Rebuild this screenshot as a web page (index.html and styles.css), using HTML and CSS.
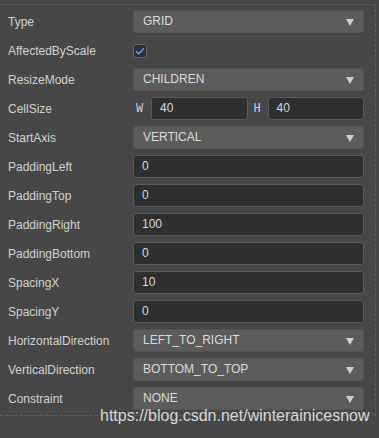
FILE: index.html
```html
<!DOCTYPE html>
<html lang="en">
<head>
    <meta charset="UTF-8">
    <meta name="viewport" content="width=device-width, initial-scale=1.0">
    <title>Layout Inspector</title>
    <link rel="stylesheet" href="styles.css">
</head>
<body>
    <div class="inspector">
        <div class="prop-row">
            <span class="prop-label">Type</span>
            <div class="select">GRID</div>
        </div>
        <div class="prop-row">
            <span class="prop-label">AffectedByScale</span>
            <span class="checkbox">
                <svg width="10" height="8" viewBox="0 0 10 8"><path d="M1 4.2 L3.8 6.8 L9 1.2" fill="none" stroke="#4d8fe8" stroke-width="1.8"/></svg>
            </span>
        </div>
        <div class="prop-row">
            <span class="prop-label">ResizeMode</span>
            <div class="select">CHILDREN</div>
        </div>
        <div class="prop-row">
            <span class="prop-label">CellSize</span>
            <div class="vec2">
                <span class="axis">W</span>
                <div class="input">40</div>
                <span class="axis">H</span>
                <div class="input">40</div>
            </div>
        </div>
        <div class="prop-row">
            <span class="prop-label">StartAxis</span>
            <div class="select">VERTICAL</div>
        </div>
        <div class="prop-row">
            <span class="prop-label">PaddingLeft</span>
            <div class="input">0</div>
        </div>
        <div class="prop-row">
            <span class="prop-label">PaddingTop</span>
            <div class="input">0</div>
        </div>
        <div class="prop-row">
            <span class="prop-label">PaddingRight</span>
            <div class="input">100</div>
        </div>
        <div class="prop-row">
            <span class="prop-label">PaddingBottom</span>
            <div class="input">0</div>
        </div>
        <div class="prop-row">
            <span class="prop-label">SpacingX</span>
            <div class="input">10</div>
        </div>
        <div class="prop-row">
            <span class="prop-label">SpacingY</span>
            <div class="input">0</div>
        </div>
        <div class="prop-row">
            <span class="prop-label">HorizontalDirection</span>
            <div class="select">LEFT_TO_RIGHT</div>
        </div>
        <div class="prop-row">
            <span class="prop-label">VerticalDirection</span>
            <div class="select">BOTTOM_TO_TOP</div>
        </div>
        <div class="prop-row">
            <span class="prop-label">Constraint</span>
            <div class="select">NONE</div>
        </div>
    </div>

    <div class="watermark">https://blog.csdn.net/winterainicesnow</div>
</body>
</html>
```

FILE: styles.css
```css
* {
    margin: 0;
    padding: 0;
    box-sizing: border-box;
}

body {
    font-family: "Liberation Sans", Arial, sans-serif;
    font-size: 12px;
    background: #474747;
    color: #d4d4d4;
    padding-top: 4px;
    position: relative;
    height: 438px;
    overflow: hidden;
}

.inspector {
    width: 376px;
    border-top: 1px solid #575757;
    border-right: 1px dashed #5e5e5e;
    border-bottom: 1px dashed #5e5e5e;
    padding: 5px 11px 5px 0;
    display: flex;
    flex-direction: column;
    gap: 6px;
}

.prop-row {
    display: flex;
    align-items: center;
    height: 23px;
}

.prop-label {
    width: 133px;
    flex-shrink: 0;
    padding-left: 8px;
    color: #d2d2d2;
}

.select {
    flex: 1;
    height: 23px;
    line-height: 21px;
    background: #5c5c5c;
    border: 1px solid #545454;
    border-radius: 3px;
    padding-left: 9px;
    color: #dadada;
    position: relative;
}

.select::after {
    content: "";
    position: absolute;
    right: 9px;
    top: 8px;
    border-left: 4px solid transparent;
    border-right: 4px solid transparent;
    border-top: 7px solid #cfcfcf;
}

.input {
    flex: 1;
    height: 23px;
    line-height: 21px;
    background: #2f2f2f;
    border: 1px solid #5a5a5a;
    border-radius: 3px;
    padding-left: 8px;
    color: #dadada;
}

.checkbox {
    width: 14px;
    height: 14px;
    background: #2e2e2e;
    border: 1px solid #6a6a6a;
    border-radius: 3px;
    display: flex;
    align-items: center;
    justify-content: center;
}

.vec2 {
    flex: 1;
    display: flex;
    align-items: center;
    height: 23px;
}

.axis {
    font-family: "Liberation Mono", "Courier New", monospace;
    font-size: 12px;
    color: #c8d0e0;
    width: 18px;
    padding-left: 3px;
}

.vec2 .axis + .input + .axis {
    width: 20px;
    padding-left: 6px;
}

.watermark {
    position: absolute;
    left: 100px;
    top: 407px;
    font-size: 16px;
    color: #d8d8d8;
    white-space: nowrap;
}
```
